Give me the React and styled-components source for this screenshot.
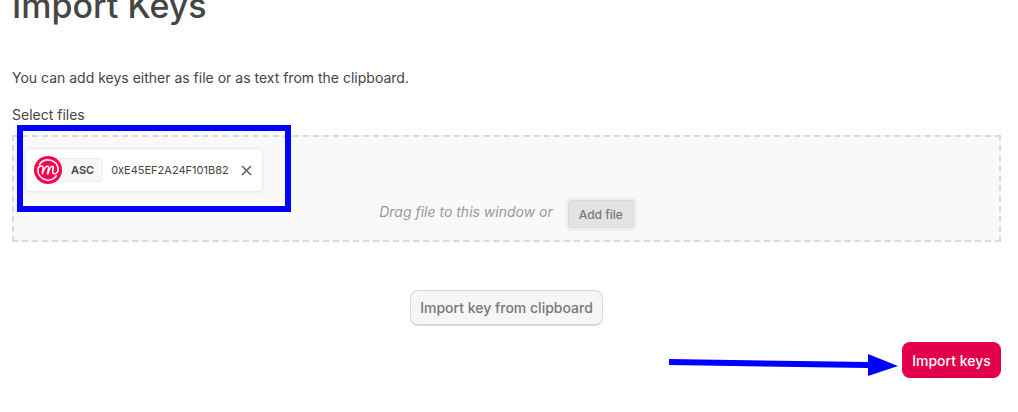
import React from "react";
import styled, { createGlobalStyle } from "styled-components";

const GlobalStyle = createGlobalStyle`
  *, *::before, *::after { box-sizing: border-box; }
  body {
    margin: 0;
    overflow: hidden;
    background: #fff;
    color: #454545;
    font-family: Inter, "Liberation Sans", sans-serif;
    font-size: 14px;
    line-height: 20px;
  }
  button { font-family: inherit; cursor: pointer; }
`;

const Page = styled.main`
  padding: 0 17px 24px 12px;
`;

const Title = styled.h1`
  margin: -16px 0 40px;
  font-size: 34px;
  line-height: 44px;
  font-weight: 500;
`;

const Text = styled.p`
  margin: 0 0 17px;
`;

const SectionTitle = styled.h2`
  margin: 0 0 10px;
  font-size: 14px;
  line-height: 20px;
  font-weight: 400;
`;

const DropZone = styled.section`
  display: flex;
  flex-direction: column;
  gap: 8px;
  margin: 0 0 48px;
  padding: 11px 11px 12px;
  border: 2px dashed #dadada;
  background: #f9f9f9;
`;

const FileList = styled.ul`
  display: flex;
  margin: 0;
  padding: 0;
  list-style: none;
`;

const FileItem = styled.li`
  position: relative;
  display: flex;
  align-items: center;
  height: 44px;
  min-width: 238px;
  padding: 0 8px;
  border: 1px solid #ececec;
  border-radius: 5px;
  background: #fff;
  box-shadow: 0 1px 3px rgba(0, 0, 0, 0.06);
  font-size: 11px;
`;

const Logo = styled.svg`
  flex: none;
  width: 28px;
  height: 28px;
  z-index: 1;
`;

const FileType = styled.span`
  height: 24px;
  margin-left: -8px;
  padding: 0 8px 0 16px;
  border: 1px solid #ececec;
  border-radius: 4px;
  background: #f7f7f7;
  font-weight: 600;
  line-height: 22px;
`;

const FileName = styled.span`
  flex: 1;
  margin-left: 8px;
`;

const RemoveButton = styled.button`
  display: flex;
  padding: 2px;
  border: 0;
  background: none;
  color: #666;
`;

const Highlight = styled.span`
  position: absolute;
  inset: -24px -29px -21px -9px;
  border: 6px solid #0000ff;
  pointer-events: none;
`;

const DropRow = styled.div`
  display: flex;
  align-items: center;
  justify-content: center;
  gap: 15px;
`;

const Hint = styled.em`
  margin-bottom: 4px;
  color: #999;
`;

const AddButton = styled.button`
  min-width: 66px;
  height: 28px;
  padding: 0 8px;
  border: 1px solid #dadada;
  border-radius: 3px;
  background: #e3e3e3;
  box-shadow: 0 0 0 3px #eee;
  color: #777;
  font-size: 12px;
  font-weight: 500;
`;

const Actions = styled.div`
  position: relative;
  display: flex;
  justify-content: ${(p) => (p.$end ? "flex-end" : "center")};
  margin-bottom: 16px;
`;

const Button = styled.button`
  min-width: ${(p) => (p.$primary ? "99px" : "193px")};
  height: 36px;
  padding: 0 8px;
  border: 1px solid ${(p) => (p.$primary ? "#e3004b" : "#d8d8d8")};
  border-bottom: ${(p) => (p.$primary ? "1px solid #d00045" : "2px solid #d8d8d8")};
  border-radius: 8px;
  background: ${(p) => (p.$primary ? "#e3004b" : "#f6f6f6")};
  color: ${(p) => (p.$primary ? "#fff" : "#777")};
  font-size: 14px;
  font-weight: 500;
`;

const Arrow = styled.svg`
  position: absolute;
  top: 10px;
  right: 103px;
  width: 230px;
  height: 26px;
  pointer-events: none;
`;

export default function App() {
  return (
    <>
      <GlobalStyle />
      <Page>
        <Title>Import Keys</Title>
        <Text>You can add keys either as file or as text from the clipboard.</Text>
        <SectionTitle id="select-files">Select files</SectionTitle>
        <DropZone aria-labelledby="select-files">
          <FileList>
            <FileItem>
              <Logo viewBox="0 0 28 28" aria-hidden="true">
                <circle cx="14" cy="14" r="14" fill="#ff004f" />
                <g fill="none" stroke="#fff" strokeLinecap="round" strokeLinejoin="round">
                  <path d="M5.6 8.4A10.2 10.2 0 0 1 24.2 13.6C24 16.200 22 18 20.200 17.800C18.400 17.500 18.500 15.800 18.900 14C19.300 12 19.800 10.300 18.400 10.200C16.500 10.200 15 13.800 14 17.600" strokeWidth="1.6" />
                  <path d="M22.400 19.800A10.200 10.200 0 0 1 3.900 13.400C4.200 11 5.800 9.800 7.400 10C9.200 10.200 9.300 11.500 9 13.200L8.300 17.600C9.500 13.800 11.600 10.200 13.600 10.200C15.400 10.300 14.600 13.200 13.400 17.600" strokeWidth="1.6" />
                </g>
              </Logo>
              <FileType>ASC</FileType>
              <FileName>0xE45EF2A24F101B82</FileName>
              <RemoveButton type="button" aria-label="Remove file">
                <svg width="11" height="11" viewBox="0 0 11 11" aria-hidden="true">
                  <path d="M1 1L10 10M10 1L1 10" stroke="currentColor" strokeWidth="1.7" />
                </svg>
              </RemoveButton>
              <Highlight />
            </FileItem>
          </FileList>
          <DropRow>
            <Hint>Drag file to this window or</Hint>
            <AddButton type="button">Add file</AddButton>
          </DropRow>
        </DropZone>
        <Actions>
          <Button type="button">Import key from clipboard</Button>
        </Actions>
        <Actions $end>
          <Arrow viewBox="0 0 230 26" aria-hidden="true">
            <path d="M1 7L200 10V2L230 14L200 24V16L1 13Z" fill="#0000ff" />
          </Arrow>
          <Button type="button" $primary>Import keys</Button>
        </Actions>
      </Page>
    </>
  );
}
